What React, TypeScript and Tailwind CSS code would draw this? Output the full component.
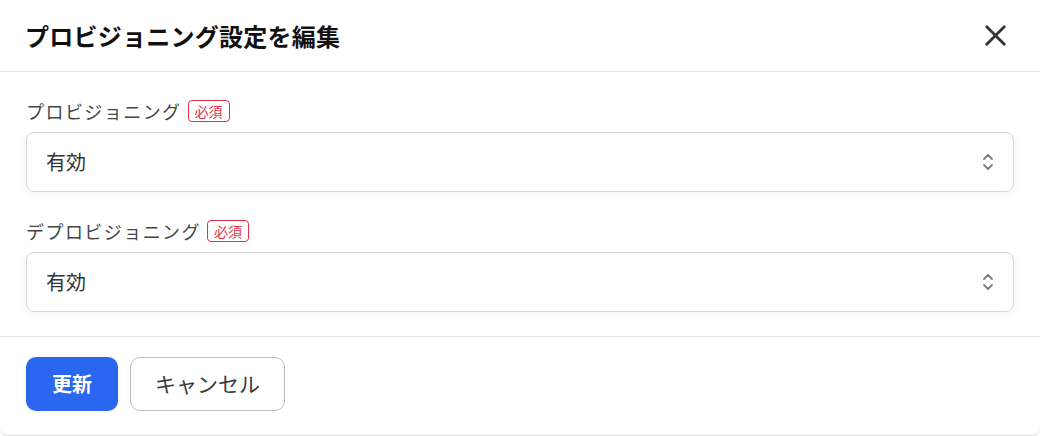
import { X } from "lucide-react";

const font = { fontFamily: '"Noto Sans CJK JP", "Noto Sans", sans-serif' };

function UpDownIcon() {
  return (
    <svg width="12" height="22" viewBox="0 0 12 22" fill="none" className="text-[#7a7a7a]">
      <path d="M2 8 L6 4 L10 8" stroke="currentColor" strokeWidth="1.8" strokeLinecap="round" strokeLinejoin="round" />
      <path d="M2 14 L6 18 L10 14" stroke="currentColor" strokeWidth="1.8" strokeLinecap="round" strokeLinejoin="round" />
    </svg>
  );
}

function Field({ label }: { label: string }) {
  return (
    <div className="flex flex-col gap-[10px]">
      <div className="flex h-[22px] items-center gap-[6px]">
        <span className="text-[18px] tracking-[0.08em] text-[#454545]">{label}</span>
        <span className="flex h-[22px] items-center rounded-[4px] border border-[#e0364b] px-[6px] text-[14px] text-[#e0364b]">
          必須
        </span>
      </div>
      <div className="flex h-[60px] items-center justify-between rounded-[8px] border border-[#d6d6d6] bg-white pl-[19px] pr-[19px] shadow-[0_2px_10px_rgba(0,0,0,0.05)]">
        <span className="text-[20px] text-[#333]">有効</span>
        <UpDownIcon />
      </div>
    </div>
  );
}

export default function App() {
  return (
    <div style={font} className="flex h-[436px] w-[1040px] flex-col rounded-b-[8px] border-b border-[#dedede] bg-white">
      {/* Header */}
      <div className="flex h-[72px] shrink-0 items-center justify-between border-b border-[#e6e6e6] pl-[25px] pr-[27px]">
        <h1 className="text-[24px] font-bold tracking-[0.01em] text-[#111]">プロビジョニング設定を編集</h1>
        <X className="h-[35px] w-[35px] text-[#333]" strokeWidth={2} />
      </div>

      {/* Body */}
      <div className="flex flex-col gap-[28px] border-b border-[#e6e6e6] px-[26px] pb-[24px] pt-[28px]">
        <Field label="プロビジョニング" />
        <Field label="デプロビジョニング" />
      </div>

      {/* Footer */}
      <div className="flex gap-[12px] px-[26px] pt-[20px]">
        <button className="h-[54px] w-[92px] rounded-[10px] bg-[#2b66f0] text-[20px] font-bold text-white">
          更新
        </button>
        <button className="h-[54px] w-[155px] rounded-[10px] border border-[#bdbdbd] bg-white text-[21px] text-[#3a3a3a]">
          キャンセル
        </button>
      </div>
    </div>
  );
}
